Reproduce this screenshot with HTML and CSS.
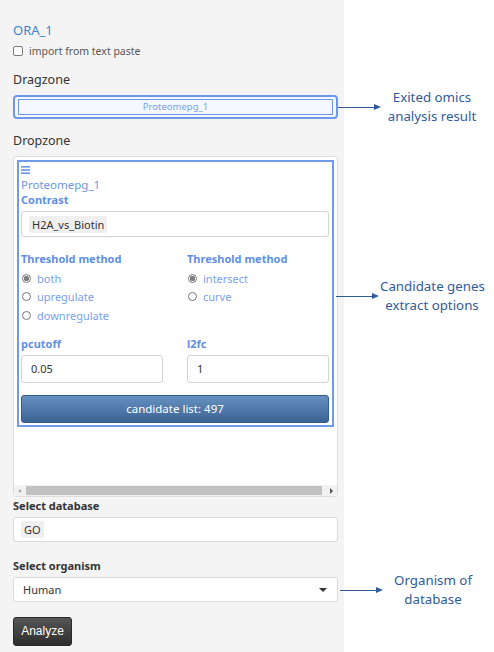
FILE: index.html
```html
<!DOCTYPE html>
<html>
<head>
<meta charset="utf-8">
<link rel="stylesheet" href="styles.css">
</head>
<body>
<div class="page">
  <div class="panel">
    <div class="title">ORA_1</div>
    <label class="check-row"><span class="checkbox"></span><span>import from text paste</span></label>
    <div class="section-label lbl-drag">Dragzone</div>
    <div class="dragzone"><div class="drag-item">Proteomepg_1</div></div>
    <div class="section-label lbl-drop">Dropzone</div>
    <div class="dropzone">
      <div class="drop-card">
        <svg class="hamburger" width="9" height="8" viewBox="0 0 9 8"><rect x="0" y="0" width="9" height="1.6" fill="#6a97e6"/><rect x="0" y="3.2" width="9" height="1.6" fill="#6a97e6"/><rect x="0" y="6.4" width="9" height="1.6" fill="#6a97e6"/></svg>
        <div class="card-name">Proteomepg_1</div>
        <div class="blue-label">Contrast</div>
        <div class="input-box contrast-box"><span class="chip">H2A_vs_Biotin</span></div>
        <div class="two-col methods">
          <div class="col">
            <div class="blue-label">Threshold method</div>
            <div class="radios">
              <div class="radio-row"><span class="radio on"></span>both</div>
              <div class="radio-row"><span class="radio"></span>upregulate</div>
              <div class="radio-row"><span class="radio"></span>downregulate</div>
            </div>
          </div>
          <div class="col">
            <div class="blue-label">Threshold method</div>
            <div class="radios">
              <div class="radio-row"><span class="radio on"></span>intersect</div>
              <div class="radio-row"><span class="radio"></span>curve</div>
            </div>
          </div>
        </div>
        <div class="two-col numbers">
          <div class="col">
            <div class="blue-label">pcutoff</div>
            <div class="input-box num-box">0.05</div>
          </div>
          <div class="col">
            <div class="blue-label">l2fc</div>
            <div class="input-box num-box">1</div>
          </div>
        </div>
        <div class="candidate-btn">candidate list: 497</div>
      </div>
      <div class="hscroll">
        <span class="arrow-l"></span>
        <span class="thumb"></span>
        <span class="arrow-r"></span>
      </div>
    </div>
    <div class="small-label lbl-db">Select database</div>
    <div class="input-box wide-box"><span class="chip">GO</span></div>
    <div class="small-label lbl-org">Select organism</div>
    <div class="input-box wide-box select-box"><span class="sel-text">Human</span><span class="caret"></span></div>
    <div class="analyze-btn">Analyze</div>
  </div>

  <div class="callout c1">
    <div class="arrow"><span class="line"></span><span class="head"></span></div>
    <div class="note">Exited omics<br>analysis result</div>
  </div>
  <div class="callout c2">
    <div class="arrow"><span class="line"></span><span class="head"></span></div>
    <div class="note">Candidate genes<br>extract options</div>
  </div>
  <div class="callout c3">
    <div class="arrow"><span class="line"></span><span class="head"></span></div>
    <div class="note">Organism of<br>database</div>
  </div>
</div>
</body>
</html>
```

FILE: styles.css
```css
* { box-sizing: border-box; }
html, body { margin: 0; padding: 0; background: #ffffff; }
body { font-family: "Noto Sans", "Open Sans", sans-serif; color: #333; }

.page { position: relative; width: 494px; height: 652px; overflow: hidden; }

.panel {
  width: 344px;
  height: 652px;
  background: #f4f4f4;
  padding: 22px 6px 0 13px;
  display: flex;
  flex-direction: column;
}

.title { font-size: 13px; line-height: 16px; height: 16px; color: #3a86c8; }

.check-row { margin-top: 7px; height: 12px; display: flex; align-items: center; gap: 6px; font-size: 10.5px; line-height: 12px; color: #555; }
.checkbox { width: 10px; height: 10px; border: 1px solid #7a7a7a; border-radius: 2px; background: #fff; flex: none; }

.section-label { font-size: 12.5px; line-height: 16px; height: 16px; color: #333; }
.lbl-drag { margin-top: 15px; }
.lbl-drop { margin-top: 14px; }

.dragzone {
  margin-top: 7px;
  height: 24px;
  border: 2px solid #6b98ea;
  border-radius: 4px;
  padding: 2px 3px;
  background: #f6f8fd;
}
.drag-item {
  height: 16px;
  border: 1px solid #6b98ea;
  background: #f5f8ff;
  text-align: center;
  font-size: 9.5px;
  line-height: 14px;
  color: #7aa1ef;
}

.dropzone {
  margin-top: 7px;
  height: 341px;
  border: 1px solid #dcdcdc;
  border-radius: 4px;
  background: #fff;
  padding: 3px 3px 0 3px;
  display: flex;
  flex-direction: column;
}
.drop-card {
  height: 267px;
  border: 2px solid #6f9be9;
  padding: 4px 3px 0 2px;
  display: flex;
  flex-direction: column;
}
.hamburger { display: block; margin-left: 0; flex: none; }
.card-name { margin-top: 3px; font-size: 11.5px; line-height: 15px; color: #6a97e6; }
.blue-label { font-size: 11px; line-height: 15px; font-weight: bold; color: #5f8fe3; }

.input-box {
  background: #fff;
  border: 1px solid #d4d4d4;
  border-radius: 3px;
  display: flex;
  align-items: center;
  font-size: 11px;
  color: #333;
}
.contrast-box { margin-top: 4px; height: 26px; padding-left: 7px; }
.chip { background: #efefef; border-radius: 2px; padding: 0 3px; line-height: 17px; font-size: 11px; color: #333; }

.two-col { display: grid; grid-template-columns: 142px 142px; column-gap: 24px; }
.methods { margin-top: 14px; }
.radios { margin-top: 3px; }
.radio-row { height: 18.6px; display: flex; align-items: center; gap: 6px; font-size: 11px; color: #7aa1ef; padding-left: 1px; }
.radio { width: 9px; height: 9px; border: 1px solid #777; border-radius: 50%; background: #fff; flex: none; }
.radio.on { background: radial-gradient(circle, #7d7d7d 0 2.5px, #fff 3px); }

.numbers { margin-top: 11px; }
.num-box { margin-top: 4px; height: 28px; padding-left: 9px; font-size: 11px; }

.candidate-btn {
  margin-top: 12px;
  height: 28px;
  border-radius: 3px;
  background: linear-gradient(#6690c0, #3b6495);
  border: 1px solid #335a88;
  color: #fff;
  font-size: 11.5px;
  text-align: center;
  line-height: 26px;
}

.hscroll {
  margin-top: auto;
  margin-left: -3px;
  margin-right: -3px;
  height: 11px;
  background: #f1f1f1;
  display: flex;
  align-items: center;
}
.arrow-l { width: 0; height: 0; border-top: 2.5px solid transparent; border-bottom: 2.5px solid transparent; border-right: 3px solid #a8a8a8; margin-left: 4px; }
.thumb { height: 9px; background: #c1c1c1; margin-left: 5px; width: 296px; }
.arrow-r { width: 0; height: 0; border-top: 3px solid transparent; border-bottom: 3px solid transparent; border-left: 3.5px solid #505050; margin-left: auto; margin-right: 4px; }

.small-label { font-size: 11px; line-height: 14px; height: 14px; font-weight: bold; color: #333; }
.lbl-db { margin-top: 2px; }
.lbl-org { margin-top: 17px; }
.wide-box { margin-top: 4px; height: 25px; padding-left: 7px; border-color: #dadada; }
.select-box { padding-left: 9px; padding-right: 10px; }
.sel-text { font-size: 11px; color: #333; }
.caret { margin-left: auto; width: 0; height: 0; border-left: 4px solid transparent; border-right: 4px solid transparent; border-top: 4px solid #333; }

.analyze-btn {
  margin-top: 15px;
  width: 59px;
  height: 29px;
  border-radius: 3px;
  background: linear-gradient(#555, #2e2e2e);
  border: 1px solid #2a2a2a;
  color: #fff;
  font-size: 12px;
  text-align: center;
  line-height: 27px;
  font-family: "Liberation Sans", "Noto Sans", sans-serif;
}

/* annotation callouts */
.callout { position: absolute; display: flex; align-items: center; }
.arrow { display: flex; align-items: center; }
.line { display: block; height: 1px; width: 36px; background: #2f5b9d; }
.head { width: 0; height: 0; border-top: 3.5px solid transparent; border-bottom: 3.5px solid transparent; border-left: 7px solid #2f5b9d; }
.note { font-size: 13.3px; line-height: 19px; color: #2f5b9d; text-align: center; white-space: nowrap; }

.c1 { left: 338px; top: 88px; }
.c1 .note { margin-left: 1px; width: 100px; }

.c2 { left: 336px; top: 277px; }
.c2 .note { margin-left: 1px; width: 104px; }

.c3 { left: 340px; top: 571px; }
.c3 .note { margin-left: 2px; width: 96px; }
```
